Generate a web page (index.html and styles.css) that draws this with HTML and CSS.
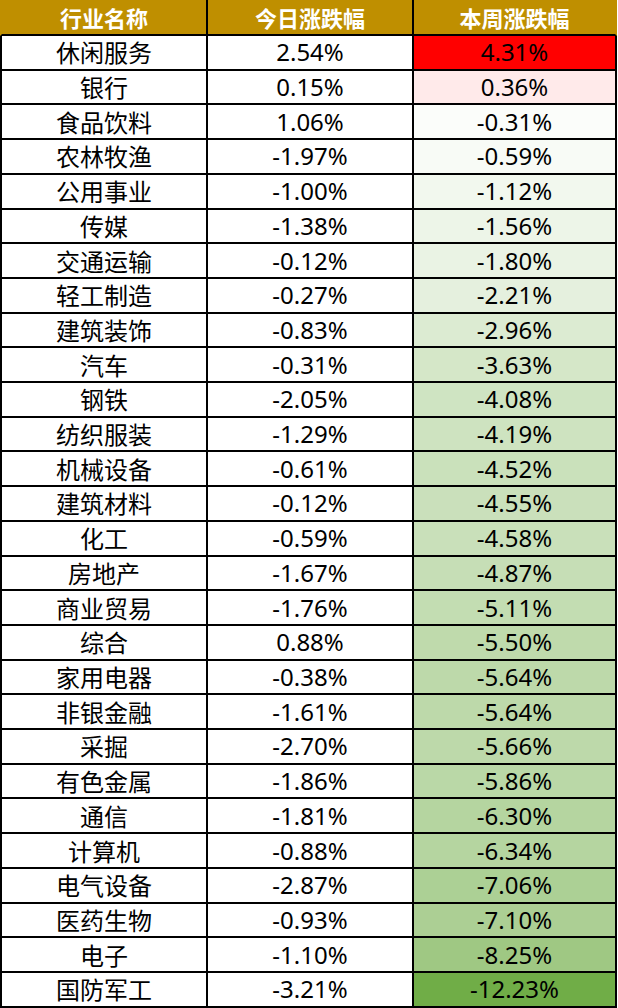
FILE: index.html
```html
<!DOCTYPE html>
<html lang="zh-CN">
<head>
<meta charset="utf-8">
<link rel="stylesheet" href="styles.css">
</head>
<body>
<table class="sheet">
<thead>
<tr class="head"><th>行业名称</th><th>今日涨跌幅</th><th>本周涨跌幅</th></tr>
</thead>
<tbody>
<tr><td>休闲服务</td><td>2.54%</td><td class="wk" style="background:rgb(255,0,0)">4.31%</td></tr>
<tr><td>银行</td><td>0.15%</td><td class="wk" style="background:rgb(255,234,234)">0.36%</td></tr>
<tr><td>食品饮料</td><td>1.06%</td><td class="wk" style="background:rgb(251,253,250)">-0.31%</td></tr>
<tr><td>农林牧渔</td><td>-1.97%</td><td class="wk" style="background:rgb(248,251,246)">-0.59%</td></tr>
<tr><td>公用事业</td><td>-1.00%</td><td class="wk" style="background:rgb(242,248,238)">-1.12%</td></tr>
<tr><td>传媒</td><td>-1.38%</td><td class="wk" style="background:rgb(237,245,232)">-1.56%</td></tr>
<tr><td>交通运输</td><td>-0.12%</td><td class="wk" style="background:rgb(234,243,228)">-1.80%</td></tr>
<tr><td>轻工制造</td><td>-0.27%</td><td class="wk" style="background:rgb(229,240,222)">-2.21%</td></tr>
<tr><td>建筑装饰</td><td>-0.83%</td><td class="wk" style="background:rgb(220,235,210)">-2.96%</td></tr>
<tr><td>汽车</td><td>-0.31%</td><td class="wk" style="background:rgb(213,231,200)">-3.63%</td></tr>
<tr><td>钢铁</td><td>-2.05%</td><td class="wk" style="background:rgb(207,228,194)">-4.08%</td></tr>
<tr><td>纺织服装</td><td>-1.29%</td><td class="wk" style="background:rgb(206,227,192)">-4.19%</td></tr>
<tr><td>机械设备</td><td>-0.61%</td><td class="wk" style="background:rgb(202,225,187)">-4.52%</td></tr>
<tr><td>建筑材料</td><td>-0.12%</td><td class="wk" style="background:rgb(202,224,187)">-4.55%</td></tr>
<tr><td>化工</td><td>-0.59%</td><td class="wk" style="background:rgb(201,224,186)">-4.58%</td></tr>
<tr><td>房地产</td><td>-1.67%</td><td class="wk" style="background:rgb(198,222,182)">-4.87%</td></tr>
<tr><td>商业贸易</td><td>-1.76%</td><td class="wk" style="background:rgb(195,221,178)">-5.11%</td></tr>
<tr><td>综合</td><td>0.88%</td><td class="wk" style="background:rgb(191,218,172)">-5.50%</td></tr>
<tr><td>家用电器</td><td>-0.38%</td><td class="wk" style="background:rgb(189,217,170)">-5.64%</td></tr>
<tr><td>非银金融</td><td>-1.61%</td><td class="wk" style="background:rgb(189,217,170)">-5.64%</td></tr>
<tr><td>采掘</td><td>-2.70%</td><td class="wk" style="background:rgb(189,217,170)">-5.66%</td></tr>
<tr><td>有色金属</td><td>-1.86%</td><td class="wk" style="background:rgb(186,216,167)">-5.86%</td></tr>
<tr><td>通信</td><td>-1.81%</td><td class="wk" style="background:rgb(181,213,160)">-6.30%</td></tr>
<tr><td>计算机</td><td>-0.88%</td><td class="wk" style="background:rgb(181,213,160)">-6.34%</td></tr>
<tr><td>电气设备</td><td>-2.87%</td><td class="wk" style="background:rgb(172,208,149)">-7.06%</td></tr>
<tr><td>医药生物</td><td>-0.93%</td><td class="wk" style="background:rgb(172,207,148)">-7.10%</td></tr>
<tr><td>电子</td><td>-1.10%</td><td class="wk" style="background:rgb(159,200,131)">-8.25%</td></tr>
<tr><td>国防军工</td><td>-3.21%</td><td class="wk" style="background:rgb(112,173,71)">-12.23%</td></tr>
</tbody>
</table>
</body>
</html>
```

FILE: styles.css
```css
html, body {
  margin: 0;
  padding: 0;
  background: #ffffff;
}

.sheet {
  width: 617px;
  height: 1008px;
  border-collapse: separate;
  border-spacing: 0;
  table-layout: fixed;
  font-family: "Noto Sans", "Noto Sans CJK SC", sans-serif;
  color: #000000;
}

.sheet th,
.sheet td {
  padding: 0;
  text-align: center;
  vertical-align: middle;
  border-bottom: 2px solid #000000;
  border-left: 2px solid #000000;
  white-space: nowrap;
  line-height: 1;
}

.sheet th:nth-child(1),
.sheet td:nth-child(1) { width: 204px; }
.sheet th:nth-child(2),
.sheet td:nth-child(2) { width: 204px; }
.sheet th:nth-child(3),
.sheet td:nth-child(3) {
  width: 201px;
  border-right: 2px solid #000000;
}

.head th {
  height: 34px;
  background: #bf8f00;
  color: #ffffff;
  font-weight: 700;
  font-size: 22px;
  font-family: "Noto Sans CJK SC", sans-serif;
}

.head th:first-child {
  border-left-color: #bf8f00;
}

.head th:last-child {
  border-right-color: #bf8f00;
}

.sheet td {
  font-size: 24px;
}

.sheet td:first-child {
  font-family: "Noto Sans CJK SC", sans-serif;
  font-size: 24px;
}
```
